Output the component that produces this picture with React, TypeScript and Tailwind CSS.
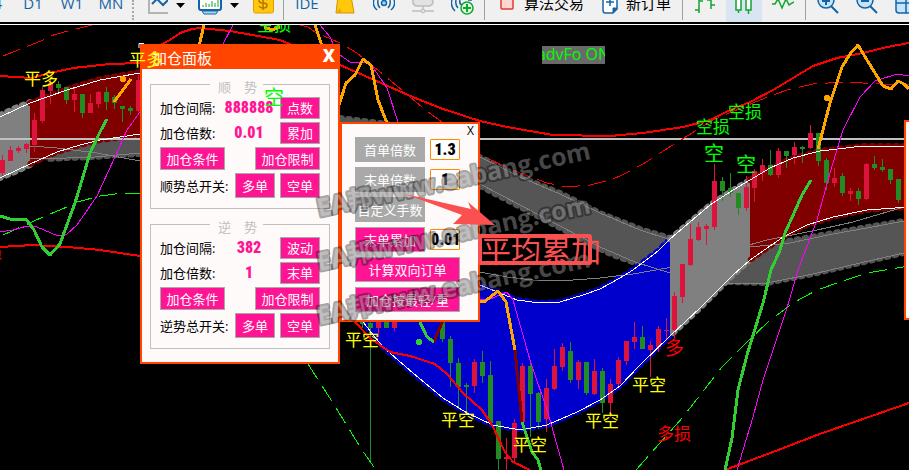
import React from "react";
import clsx from "clsx";

type Candle = [x: number, high: number, top: number, bottom: number, low: number, up: 0 | 1];

const candles: Candle[] = [
	[2, 155, 160, 173, 178, 1], [10, 146, 150, 161, 161, 1], [18, 146, 148, 151, 153, 1], [26, 143, 144, 149, 153, 1],
	[34, 113, 120, 145, 152, 1], [42, 87, 90, 121, 123, 1], [50, 77, 83, 91, 104, 1], [58, 81, 84, 88, 93, 0],
	[66, 87, 87, 100, 104, 0], [74, 88, 94, 100, 112, 1], [82, 94, 94, 113, 118, 0], [90, 94, 103, 113, 113, 1],
	[98, 91, 92, 104, 108, 1], [106, 87, 92, 102, 110, 0], [114, 95, 97, 103, 109, 0], [122, 106, 106, 109, 122, 0],
	[130, 106, 108, 111, 115, 0], [138, 75, 80, 111, 112, 1],
	[362, 318, 322, 324, 328, 0], [370, 318, 323, 328, 462, 0], [378, 318, 320, 328, 337, 1], [386, 318, 320, 328, 328, 0],
	[394, 318, 320, 328, 331, 1], [442, 318, 320, 339, 342, 0], [450, 336, 339, 363, 387, 0], [458, 358, 363, 387, 409, 0],
	[466, 383, 385, 387, 413, 0], [474, 359, 362, 386, 393, 1], [482, 351, 362, 376, 383, 0], [490, 361, 375, 423, 423, 0],
	[498, 421, 421, 459, 470, 0], [506, 438, 457, 459, 470, 1], [514, 419, 423, 458, 464, 1], [522, 363, 366, 422, 422, 1],
	[530, 360, 366, 394, 437, 0], [538, 392, 393, 422, 429, 0], [546, 379, 388, 419, 432, 1], [554, 349, 366, 389, 390, 1],
	[562, 343, 347, 367, 371, 1], [570, 342, 351, 380, 383, 0], [578, 360, 362, 380, 389, 1], [586, 362, 362, 393, 395, 0],
	[594, 359, 371, 394, 395, 1], [602, 368, 371, 403, 413, 0], [610, 379, 384, 403, 417, 1], [618, 357, 360, 384, 388, 1],
	[626, 341, 341, 361, 365, 1], [634, 322, 337, 342, 349, 1], [642, 326, 337, 349, 349, 0], [650, 341, 345, 350, 377, 1],
	[658, 326, 329, 347, 352, 1], [666, 318, 330, 331, 340, 1], [674, 292, 296, 330, 338, 1], [682, 264, 264, 297, 303, 1],
	[690, 224, 239, 265, 266, 1], [698, 222, 227, 240, 241, 1], [706, 224, 226, 229, 245, 1], [714, 164, 181, 227, 230, 1],
	[722, 177, 181, 191, 201, 0], [730, 173, 188, 193, 197, 0], [738, 193, 193, 208, 215, 0], [746, 176, 187, 208, 211, 1],
	[754, 169, 171, 188, 202, 1], [762, 159, 165, 173, 181, 1], [770, 150, 165, 175, 176, 0], [778, 148, 151, 175, 178, 1],
	[786, 151, 151, 156, 168, 0], [794, 142, 147, 155, 164, 1], [802, 146, 147, 149, 163, 0], [810, 125, 133, 148, 149, 1],
	[818, 133, 133, 161, 166, 0], [826, 158, 160, 183, 190, 0], [834, 168, 178, 183, 187, 1], [842, 173, 176, 193, 196, 0],
	[850, 188, 191, 194, 201, 1], [858, 188, 191, 199, 205, 0], [866, 163, 164, 199, 200, 1], [874, 156, 164, 168, 170, 0],
	[882, 159, 167, 170, 172, 0], [890, 169, 169, 180, 184, 0], [898, 179, 179, 200, 203, 0],
];

// upper and lower edge of each coloured channel, left to right
const bands = [
	{ fill: "#555555", top: "340,118 387,124 430,137 480,157 520,177 560,193 600,213 640,229 670,238", bottom: "670,275 635,263 613,255 600,249 560,228 520,207 480,186 430,160 340,130" },
	{ fill: "#555555", top: "40,158 57,152 80,145 100,140 140,135", bottom: "140,154 120,155 95,157 67,158 45,159" },
	{ fill: "#555555", top: "730,281 750,262 783,242 833,233 867,227 904,221", bottom: "904,253 860,263 813,274 767,283 730,282" },
	{ fill: "#0000cd", top: "340,210 400,250 480,285 500,293 517,300 540,303 560,302 583,295 600,289 620,278 633,270 658,251 670,239", bottom: "670,336 640,365 620,386 600,400 577,412 547,425 520,430 493,425 467,413 443,398 413,373 383,347 363,322 340,300" },
	{ fill: "#808080", top: "0,115 15,108 30,102", bottom: "30,165 15,172 0,178" },
	{ fill: "#808080", top: "670,239 690,222 710,205 733,190 750,180", bottom: "750,260 733,275 700,308 670,336" },
	{ fill: "#800000", top: "30,103 67,89 100,79 140,72", bottom: "140,135 100,140 80,145 57,152 30,164" },
	{ fill: "#800000", top: "750,180 770,168 793,158 820,151 863,146 909,146", bottom: "909,207 867,210 833,217 807,225 783,237 750,260" },
];

const whiteLines = [
	"0,117 30,103 67,90 100,80 140,73",
	"0,178 30,164 57,152 80,145 100,140 140,134",
	"480,285 500,293 517,300 540,303 560,302 583,295 600,289 620,278 633,270 658,251 670,239 690,222 710,205 733,190 750,180 770,168 793,158 820,151 863,146 909,146",
	"363,322 383,347 413,373 443,398 467,413 493,425 520,430 547,425 577,412 600,400 620,386 640,365 670,336 700,308 733,275 750,260 783,237 807,225 833,217 867,210 909,207",
];

const grayLines = [
	"0,144 30,146 57,148 97,153 140,161",
	"30,158 67,158 95,157 140,153",
	"480,157 520,177 560,194 600,213 640,230 668,239",
	"480,184 520,205 560,226 600,247 635,262 670,273",
	"480,272 507,277 533,280 560,281 600,278 633,274 667,268 700,260 738,248 767,240 817,230 853,222 904,207",
	"690,243 750,247 790,243 833,234 867,228 904,221",
	"727,283 767,283 813,274 860,263 904,253",
];

const redLines = [
	"0,76 32,78 50,73 73,68 110,64 140,63",
	"160,45 170,40 180,33 192,29 200,28 230,31 280,40 340,65 372,79 408,95 440,108 480,121 507,127 553,135 610,136 643,133 683,127 710,120 730,110 750,102 773,90 813,66 837,58 863,53 887,47 909,43",
	"0,247 33,245 67,247 100,250 140,256",
	"355,322 370,338 390,352 410,356 435,364 447,374 463,393 482,410 492,425 505,452 513,462 530,470",
	"725,470 773,452 817,435 883,412 909,403",
];

const redDashes = [
	"3,56 41,41 50,36 68,31 92,25",
	"300,25 308,27 315,32 340,43 357,53 385,76 428,112 442,122 480,155 520,173 547,183 567,187 590,185 610,180 620,176 643,164 668,148 692,133 713,120 760,100 787,90 813,84 843,82 883,84 909,85",
];

const limeDashes = [
	"3,235 43,217 67,207 77,202 100,196 123,193 140,193",
	"308,364 333,403 362,450 376,470",
	"636,470 683,417 722,367 747,342 768,322 793,303 817,290 840,282 867,273 909,266",
];

const magentaLines = [
	"0,232 13,230 27,226 37,227 58,236 67,234 77,225 97,196 115,157 127,130 140,112",
	"233,25 222,46",
	"320,25 330,37 334,46 340,55 350,62 370,63 387,88 398,122",
	"480,299 490,299 507,292 513,300 530,360 548,413 564,470",
	"737,470 753,417 763,380 787,308 798,270 817,220 830,173 843,130 860,97 875,81 897,74 909,76",
];

const trendLines = [
	{ color: "#ffa500", points: "114,102 131,79" },
	{ color: "#ffa500", points: "204,25 199,46" },
	{ color: "#ffa500", points: "264,27 272,30 280,27" },
	{ color: "#ffa500", points: "315,25 322,46" },
	{ color: "#ffa500", points: "339,105 346,83 355,75 363,59 371,65 378,100 387,123" },
	{ color: "#ffa500", points: "478,301 484,302 498,291 506,302 515,350" },
	{ color: "#ffa500", points: "818,149 830,103 842,67 850,54 858,45 867,60 883,86 891,89 898,81 904,84 909,89" },
	{ color: "#800000", points: "515,350 522,422" },
	{ color: "#800000", points: "434,342 443,320" },
	{ color: "#32cd32", points: "0,216 10,219 27,220 34,230 42,247 50,255 60,244 65,230 75,203 82,180 90,153 100,132 107,119" },
	{ color: "#32cd32", points: "419,320 427,337 434,342" },
	{ color: "#32cd32", points: "522,422 527,437 532,452 538,460 541,470" },
	{ color: "#32cd32", points: "725,470 732,438 738,390 747,355 763,303 771,270 780,250 785,233 794,213 802,195 811,180" },
];

const dots = [
	{ x: 123, y: 79, color: "#ffa500" },
	{ x: 827, y: 98, color: "#ffa500" },
	{ x: 419, y: 342, color: "#32cd32" },
];

const signals = [
	{ x: 24, y: 85, size: 17, color: "#ffff00", text: "平多" },
	{ x: 345, y: 346, size: 17, color: "#ffff00", text: "平空" },
	{ x: 441, y: 426, size: 17, color: "#ffff00", text: "平空" },
	{ x: 513, y: 451, size: 17, color: "#ffff00", text: "平空" },
	{ x: 585, y: 427, size: 17, color: "#ffff00", text: "平空" },
	{ x: 632, y: 391, size: 17, color: "#ffff00", text: "平空" },
	{ x: 257, y: 31, size: 17, color: "#00ff00", text: "空损" },
	{ x: 696, y: 133, size: 17, color: "#00ff00", text: "空损" },
	{ x: 728, y: 118, size: 17, color: "#00ff00", text: "空损" },
	{ x: 704, y: 161, size: 20, color: "#00ff00", text: "空" },
	{ x: 736, y: 172, size: 20, color: "#00ff00", text: "空" },
	{ x: 665, y: 355, size: 19, color: "#ff0000", text: "多" },
	{ x: 657, y: 440, size: 17, color: "#ff0000", text: "多损" },
	{ x: -15, y: 258, size: 17, color: "#ff0000", text: "损" },
];

const Chart = () => {
	return (
		<svg viewBox="0 25 909 445" preserveAspectRatio="xMinYMin slice" className="block h-full w-full" fill="none">
			{bands.map((band, i) => (
				<g key={i}>
					<polygon points={`${band.top} ${band.bottom}`} fill={band.fill} />
					<polyline points={band.top} stroke={band.fill} strokeWidth="6" strokeLinecap="round" strokeDasharray="2 6" />
					<polyline points={band.bottom} stroke={band.fill} strokeWidth="6" strokeLinecap="round" strokeDasharray="2 6" />
				</g>
			))}
			<path d="M0 139H909" stroke="#c0c0c0" strokeWidth="2" />
			<g shapeRendering="crispEdges">
				{grayLines.map((p) => <polyline key={p} points={p} stroke="#808080" />)}
			</g>
			<g shapeRendering="crispEdges">
				{candles.map(([x, high, top, bottom, low, up]) => (
					<g key={x} fill={up ? "#dc143c" : "#228b22"}>
						<rect x={x} y={high} width="1" height={low - high} />
						<rect x={x - 2} y={top} width="5" height={bottom - top} />
					</g>
				))}
				{whiteLines.map((p) => <polyline key={p} points={p} stroke="#ffffff" />)}
				{redDashes.map((p) => <polyline key={p} points={p} stroke="#ff0000" strokeDasharray="18 8" />)}
				{limeDashes.map((p) => <polyline key={p} points={p} stroke="#00ff00" strokeDasharray="18 8" />)}
				{redLines.map((p) => <polyline key={p} points={p} stroke="#ff0000" strokeWidth="2" />)}
				{magentaLines.map((p) => <polyline key={p} points={p} stroke="#ff00ff" />)}
				{trendLines.map((l) => <polyline key={l.points} points={l.points} stroke={l.color} strokeWidth="3" strokeLinejoin="round" />)}
				{dots.map((d) => <circle key={d.x} cx={d.x} cy={d.y} r="3" fill={d.color} />)}
			</g>
			{signals.map((s) => (
				<text key={`${s.x}-${s.y}`} x={s.x} y={s.y} fontSize={s.size} fill={s.color}>{s.text}</text>
			))}
		</svg>
	);
};

const Separator = ({ className }: { className: string }) => (
	<span className={clsx("h-5 w-px shrink-0 self-start bg-[#a0a0a0]", className)} />
);

type ToolProps = { label: string; className: string; width?: number; children: React.ReactNode };

const Tool = ({ label, className, width, children }: ToolProps) => (
	<button type="button" aria-label={label} className={clsx("h-[22px] shrink-0", className)}>
		<svg width={width ?? 36} height="22" viewBox={`0 0 ${width ?? 36} 22`} fill="none" strokeWidth="2">{children}</svg>
	</button>
);

const Caret = () => (
	<Tool label="更多" width={10} className="ml-2"><path d="M0 3H9L4.500 8Z" fill="#000" /></Tool>
);

const Toolbar = () => {
	const period = "h-[22px] shrink-0 pb-4 text-center leading-[6px] text-[#1464a5]";
	return (
		<div className="flex h-[22px] overflow-hidden bg-[#f0f0f0] text-[15px] text-black">
			<button type="button" className={clsx(period, "flex w-4 justify-end pr-3.5")}>H4</button>
			<button type="button" className={clsx(period, "w-[34px]")}>D1</button>
			<button type="button" className={clsx(period, "w-[44px]")}>W1</button>
			<button type="button" className={clsx(period, "w-[34px]")}>MN</button>
			<span className="ml-1 h-5 w-0 shrink-0 border-l-2 border-dotted border-[#a8a8a8]" />
			<Tool label="折线" width={20} className="ml-3.5">
				<path d="M1 0V13H21" stroke="#b4b4b4" />
				<path d="M4 4L9-1L15 5L20 0" stroke="#1464a5" />
			</Tool>
			<Caret />
			<Tool label="指标" width={24} className="ml-3">
				<path d="M1-1V8Q1 10 3 10H21Q23 10 23 8V-1" stroke="#1464a5" fill="#fff" />
				<path d="M4 11H20L18 14H6Z" fill="#a8d4f8" stroke="#1464a5" strokeWidth="1" />
				<path d="M5 7V5M8 7V3M11 7V4M14 7V1M17 7V3M20 7V0" stroke="#12a52d" strokeWidth="1" />
			</Tool>
			<Caret />
			<Tool label="报价" width={22} className="ml-3">
				<rect x="1.500" y="-7" width="20" height="20" rx="2" fill="#ffc80a" stroke="#e09c00" strokeWidth="1" />
				<path d="M15 0Q14-2 11-2Q7-2 7 .5Q7 3 11 3Q15 3 15 5.500Q15 8 11 8Q8 8 7 6M11-4V10" stroke="#b87400" strokeWidth="1.500" />
			</Tool>
			<Separator className="ml-[9px]" />
			<button type="button" className={clsx(period, "ml-[11px] w-6")}>IDE</button>
			<Tool label="市场" width={20} className="ml-4">
				<path d="M3-4H16L19 13H1Z" fill="#ffc80a" stroke="#d29400" strokeWidth="1" />
				<path d="M1 13L5 8L7 13Z" fill="#e8a900" />
			</Tool>
			<Tool label="信号" width={22} className="ml-[18px]">
				<circle cx="11" cy="3" r="2.500" fill="#a8d4f8" stroke="#1464a5" strokeWidth="1.500" />
				<path d="M7 8Q4 5 5 0M15 8Q18 5 17 0M4 10Q-1 6 1-1M18 10Q23 6 21-1" stroke="#1464a5" strokeWidth="1.500" />
			</Tool>
			<Tool label="云" width={24} className="ml-4">
				<path d="M5-2Q1-1 2 3Q3 6 6 6H18Q22 5 22 2Q22 0 19-2Z" fill="#e2e2e2" stroke="#bdbdbd" strokeWidth="1.500" />
				<path d="M12 6V11M1 11H23" stroke="#bdbdbd" strokeWidth="1.500" />
				<circle cx="12" cy="11" r="2" fill="#e2e2e2" stroke="#bdbdbd" strokeWidth="1" />
			</Tool>
			<Tool label="订阅信号" width={24} className="ml-4">
				<path d="M7 8Q4 5 5 0M4 11Q-1 6 1-1M11 5Q8 4 9 0M17 0H21" stroke="#1464a5" strokeWidth="1.500" />
				<circle cx="16" cy="8" r="6" fill="#dcf7df" stroke="#12a52d" strokeWidth="1.500" />
				<path d="M16 4V12M12 8H20" stroke="#12a52d" />
			</Tool>
			<Separator className="ml-[9px]" />
			<button type="button" className="ml-[15px] flex h-[22px] shrink-0 gap-2.5">
				<svg width="14" height="22" viewBox="0 0 14 22"><rect x="1" y="-6" width="12" height="15" rx="1" fill="#ffd6d1" stroke="#dc3c32" strokeWidth="1.500" /></svg>
				<span className="w-[60px] leading-[6px]">算法交易</span>
			</button>
			<button type="button" className="ml-[18px] flex h-[22px] shrink-0 gap-2">
				<svg width="16" height="22" viewBox="0 0 16 22" fill="none" stroke="#1464a5">
					<path d="M1-4H15V9L11 13H3Q1 13 1 10Z" fill="#fff" strokeWidth="1.500" />
					<path d="M15 8L11 13V8Z" fill="#1464a5" />
					<path d="M8-2V6M4 2H12" strokeWidth="1.500" />
				</svg>
				<span className="w-[45px] leading-[6px]">新订单</span>
			</button>
			<Separator className="ml-[11px]" />
			<Tool label="柱形图" width={22} className="ml-[11px]">
				<path d="M5 0V13M1 10H5M5 1H9M17-1V9M17 5H21M13 0H17" stroke="#12a52d" strokeWidth="1.500" />
			</Tool>
			<Tool label="蜡烛图" className="ml-2.5 bg-[#d9e5f3]">
				<path d="M10-1H15V10H10ZM12.500 10V13M20-1H25V10H20ZM22.500 10V14" fill="#fff" stroke="#12a52d" strokeWidth="1.500" />
			</Tool>
			<Tool label="线形图" width={22} className="ml-2.5">
				<path d="M0 4H3L6-1L10 8L14-1L17 5L22 2" stroke="#12a52d" strokeWidth="1.500" />
			</Tool>
			<Separator className="ml-[11px]" />
			<Tool label="放大" width={22} className="ml-[11px]">
				<circle cx="9" cy="0" r="8" fill="#c3e4fb" stroke="#1464a5" strokeWidth="1.500" />
				<path d="M5 1H13M9-3V5M14 6L21 13" stroke="#1464a5" />
			</Tool>
			<Tool label="缩小" width={22} className="ml-[17px]">
				<circle cx="9" cy="0" r="8" fill="#c3e4fb" stroke="#1464a5" strokeWidth="1.500" />
				<path d="M5 1H13M14 6L21 13" stroke="#1464a5" />
			</Tool>
			<Tool label="平铺" width={22} className="ml-[17px]">
				<path d="M1-6H21V10Q21 13 18 13H4Q1 13 1 10ZM1 3H21M11-6V13" fill="#c3e4fb" stroke="#1464a5" strokeWidth="1.500" />
			</Tool>
		</div>
	);
};

type PanelButtonProps = { className: string; muted?: boolean; children: React.ReactNode };

const PanelButton = ({ className, muted, children }: PanelButtonProps) => (
	<button
		type="button"
		className={clsx(
			"flex shrink-0 items-center justify-center whitespace-nowrap border border-[#a9a9a9] text-[13px] leading-4 text-white",
			muted ? "bg-[#a9a9a9]" : "bg-[#ff1493]",
			className,
		)}
	>
		{children}
	</button>
);

const narrow = "font-['Liberation_Sans_Narrow','Roboto_Condensed','Roboto',sans-serif] text-[16px] font-black";

type GroupProps = { id: string; title: string; total: string; gap: string; times: string; gapUnit: string; timesUnit: string };

const Group = ({ id, title, total, gap, times, gapUnit, timesUnit }: GroupProps) => {
	const value = clsx(narrow, "w-[54px] min-w-0 bg-transparent text-center leading-5 text-[#ff1493] outline-none");
	return (
		<fieldset className="relative flex h-[125px] flex-col gap-[3px] border border-[#c0c0c0] px-[9px] pt-3 text-[13px] leading-4">
			<legend className="absolute -top-1.5 left-[59px] w-[53px] whitespace-pre bg-[#fffafa] pl-2 text-[#c0c0c0]">{title}</legend>
			<div className="flex h-[22px] items-center">
				<label htmlFor={`${id}-gap`} className="w-[62px]">加仓间隔:</label>
				<input id={`${id}-gap`} defaultValue={gap} className={value} />
				<PanelButton className="ml-auto h-[22px] w-10">{gapUnit}</PanelButton>
			</div>
			<div className="flex h-[22px] items-center">
				<label htmlFor={`${id}-times`} className="w-[62px]">加仓倍数:</label>
				<input id={`${id}-times`} defaultValue={times} className={value} />
				<PanelButton className="ml-auto h-[22px] w-10">{timesUnit}</PanelButton>
			</div>
			<div className="flex justify-between">
				<PanelButton className="h-[23px] w-[65px]">加仓条件</PanelButton>
				<PanelButton className="h-[23px] w-[65px]">加仓限制</PanelButton>
			</div>
			<div className="flex items-center gap-[5px]">
				<span className="mr-auto whitespace-nowrap">{total}</span>
				<PanelButton className="h-[25px] w-10">多单</PanelButton>
				<PanelButton className="h-[25px] w-10">空单</PanelButton>
			</div>
		</fieldset>
	);
};

const AddPanel = () => (
	<section className="absolute left-[140px] top-[19px] w-[200px] border-2 border-[#ff4500] bg-[#fffafa] pb-[13px] text-black">
		<header className="flex h-[23px] items-center justify-between bg-[#ff4500] pl-2.5 pr-[3px] text-white">
			<h1 className="text-[15px] leading-5">加仓面板</h1>
			<button type="button" aria-label="关闭" className="pb-1 font-['Open_Sans',sans-serif] text-[17px] font-extrabold leading-4">X</button>
		</header>
		<div className="flex flex-col gap-[15px] px-2 pt-[15px]">
			<Group id="with" title="顺　势" total="顺势总开关:" gap="888888" times="0.01" gapUnit="点数" timesUnit="累加" />
			<Group id="against" title="逆　势" total="逆势总开关:" gap="382" times="1" gapUnit="波动" timesUnit="末单" />
		</div>
	</section>
);

const LotInput = ({ label, value }: { label: string; value: string }) => (
	<input
		aria-label={label}
		defaultValue={value}
		className={clsx(narrow, "h-[21px] w-[30px] rounded-[1px] border border-[#ff8c00] bg-white text-center leading-4 text-black outline-none")}
	/>
);

const LotPanel = () => (
	<section className="absolute left-[340px] top-[97px] h-[200px] w-[140px] border-2 border-[#ff4500] bg-[#fffafa] text-black">
		<button type="button" aria-label="关闭" className="absolute right-1 top-0 text-[12px] leading-[14px]">X</button>
		<div className="flex flex-col gap-[5px] pl-[13px] pr-[18px] pt-[13px]">
			<div className="flex items-center justify-between">
				<PanelButton muted className="h-[25px] w-[70px]">首单倍数</PanelButton>
				<LotInput label="首单倍数" value="1.3" />
			</div>
			<div className="flex items-center justify-between">
				<PanelButton muted className="h-[25px] w-[70px]">末单倍数</PanelButton>
				<LotInput label="末单倍数" value="1" />
			</div>
			<PanelButton muted className="h-[25px] w-[70px]">自定义手数</PanelButton>
			<div className="flex items-center justify-between">
				<PanelButton className="h-[25px] w-[70px]">末单累加</PanelButton>
				<LotInput label="末单累加" value="0.01" />
			</div>
			<PanelButton className="h-[25px] w-full">计算双向订单</PanelButton>
			<PanelButton className="h-[25px] w-full">加仓按最轻/重</PanelButton>
		</div>
	</section>
);

// marks that lie over both the chart and the panels
const Overlay = () => (
	<svg width="909" height="445" viewBox="0 25 909 445" className="pointer-events-none absolute left-0 top-0" fill="none">
		<text x="129" y="66" fontSize="17" fill="#ffff00">平多</text>
		<text x="264" y="105" fontSize="20" fill="#00ff00">空</text>
		<path d="M139 48V43.500H144" stroke="#fff" />
		{[217, 271, 325].map((y) => (
			<text
				key={y}
				x="319"
				y={y}
				transform={`rotate(-12 319 ${y})`}
				fontSize="25"
				fontWeight="700"
				fill="#ffffff"
				fillOpacity="0.28"
				stroke="#000000"
				strokeOpacity="0.36"
				strokeWidth="4"
				strokeLinejoin="round"
				paintOrder="stroke"
				className="font-['Open_Sans','Noto_Sans_CJK_SC',sans-serif]"
			>
				EA邦www.eabang.com
			</text>
		))}
		<path d="M405 194L471 209L468 202L495 225L453 224L462 215Z" fill="#fa5050" />
		<rect x="480" y="236" width="110" height="27" rx="1" stroke="#fa5050" strokeWidth="4" />
		<text x="481" y="262" fontSize="30" fill="#fa5050">平均累加</text>
	</svg>
);

const App = () => {
	return (
		<div className="flex min-h-screen flex-col overflow-hidden bg-black font-['Open_Sans','Noto_Sans_CJK_SC',sans-serif]">
			<Toolbar />
			<div className="mt-0.5 h-px bg-white" />
			<main className="relative min-h-[445px] flex-1 overflow-hidden">
				<div className="absolute inset-0">
					<Chart />
				</div>
				<div className="absolute left-[542px] top-[21px] flex h-[18px] w-[63px] items-center justify-center overflow-hidden whitespace-nowrap bg-[#696969] pb-0.5 text-[16px] leading-4 text-[#00ff00]">
					advFo ON
				</div>
				<AddPanel />
				<LotPanel />
				<aside className="absolute left-[904px] top-[95px] h-[200px] w-[140px] border-2 border-[#ff4500] bg-[#fffafa]" />
				<Overlay />
			</main>
		</div>
	);
};

export default App;
